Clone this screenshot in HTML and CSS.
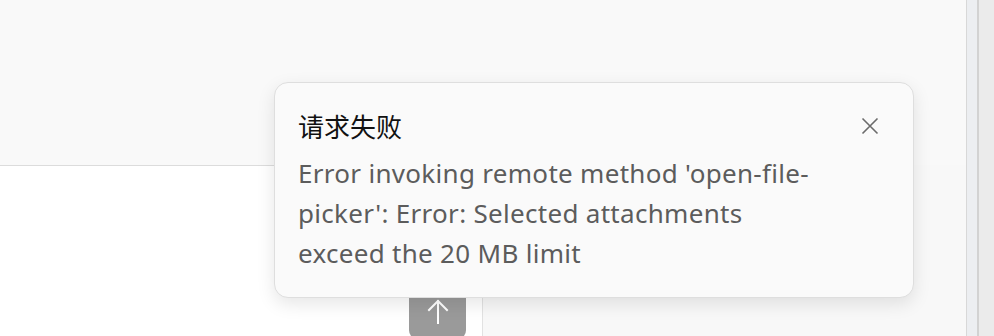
FILE: index.html
```html
<!DOCTYPE html>
<html lang="zh">
<head>
<meta charset="utf-8">
<title>请求失败</title>
<link rel="stylesheet" href="styles.css">
</head>
<body>
<div class="app">
  <div class="main">
    <div class="top"></div>
    <div class="bottom">
      <div class="composer">
        <div class="send">
          <svg width="22" height="26" viewBox="0 0 22 26" fill="none" stroke="#fff" stroke-width="2" stroke-linecap="square">
            <path d="M11 3 V25"/>
            <path d="M2 12 L11 3 L20 12"/>
          </svg>
        </div>
      </div>
      <div class="rest"></div>
    </div>
    <div class="toast">
      <div class="toast-head">
        <div class="toast-title">请求失败</div>
        <button class="toast-close" aria-label="关闭">
          <svg width="18" height="18" viewBox="0 0 18 18" stroke="#6b6b6b" stroke-width="1.6" fill="none">
            <path d="M1.5 1.5 L16.5 16.5 M16.5 1.5 L1.5 16.5"/>
          </svg>
        </button>
      </div>
      <div class="toast-body">Error invoking remote method 'open-file-<br>picker': Error: Selected attachments<br>exceed the 20 MB limit</div>
    </div>
  </div>
  <div class="scroll">
    <div class="track"></div>
    <div class="sep"></div>
    <div class="outer"></div>
  </div>
</div>
</body>
</html>
```
FILE: styles.css
```css
html, body {
  margin: 0;
  padding: 0;
  height: 100%;
  overflow: hidden;
}
body {
  font-family: "Noto Sans", "Noto Sans CJK SC", sans-serif;
  background: #f9f9f9;
}
.app {
  display: flex;
  height: 336px;
  width: 994px;
}
.main {
  position: relative;
  flex: 0 0 966px;
  display: flex;
  flex-direction: column;
  background: #f9f9f9;
}
.top {
  height: 165px;
  flex: 0 0 165px;
}
.bottom {
  flex: 1;
  display: flex;
}
.composer {
  width: 482px;
  background: #fff;
  border-top: 1px solid #dcdcdc;
  border-right: 1px solid #e2e2e2;
  position: relative;
}
.send {
  position: absolute;
  left: 409px;
  top: 110px;
  width: 57px;
  height: 64px;
  background: #9a9a9a;
  border-radius: 10px;
  display: flex;
  justify-content: center;
  align-items: flex-start;
  padding-top: 22px;
  box-sizing: border-box;
}
.rest {
  flex: 1;
  background: #f8f8f8;
}
.toast {
  position: absolute;
  left: 274px;
  top: 82px;
  width: 640px;
  box-sizing: border-box;
  background: #fafafa;
  border: 1px solid #dedede;
  border-radius: 14px;
  padding: 23px 24px 24px 23px;
  box-shadow: 0 6px 18px rgba(0, 0, 0, 0.10);
}
.toast-head {
  display: flex;
  justify-content: space-between;
  align-items: center;
  height: 40px;
  margin-bottom: 7px;
}
.toast-title {
  font-family: "Noto Sans CJK SC", sans-serif;
  font-size: 26px;
  color: #111;
  line-height: 40px;
}
.toast-close {
  border: 0;
  background: transparent;
  padding: 0;
  margin-right: 10px;
  width: 18px;
  height: 18px;
  display: flex;
}
.toast-body {
  font-size: 26px;
  letter-spacing: 0.3px;
  line-height: 40px;
  color: #5c5c5c;
  white-space: nowrap;
}
.scroll {
  flex: 1;
  display: flex;
  border-left: 1px solid #d8d8d8;
}
.track {
  width: 10px;
  background: #eceef1;
}
.sep {
  width: 2px;
  background: #d2d2d2;
}
.outer {
  flex: 1;
  background: #ebebeb;
}
```
